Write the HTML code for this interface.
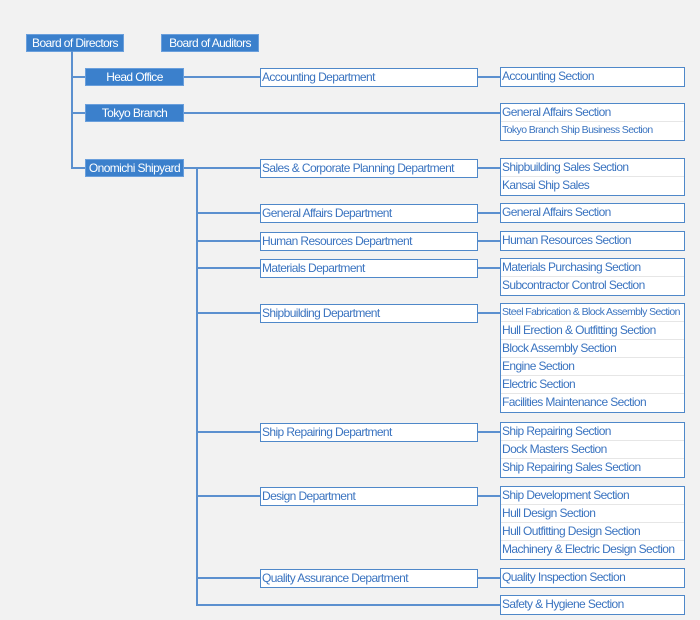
<!DOCTYPE html>
<html><head><meta charset="utf-8"><style>
body{margin:0;width:700px;height:620px;background:#f2f2f2;position:relative;overflow:hidden;font-family:"Liberation Sans",sans-serif;font-size:12px;letter-spacing:-0.6px}
.b{position:absolute;background:#3b80cc;color:#fff;height:18px;line-height:17px;text-align:center;box-sizing:border-box;border:1px solid #6a9fdc}
.d{position:absolute;left:260px;width:218px;height:19px;line-height:17px;background:#fff;border:1.5px solid #4f88c9;box-sizing:border-box;color:#3b74c0;padding-left:1px;white-space:nowrap}
.s{position:absolute;left:500px;width:185px;background:#fff;border:1.5px solid #4f88c9;box-sizing:border-box;color:#3b74c0}
.s div{height:18px;box-sizing:border-box;line-height:17px;border-bottom:1px solid #e6e6e6;padding-left:1px;white-space:nowrap}
.s div:last-child{border-bottom:none}
.h{position:absolute;height:1.5px;background:#5b90cf}
.v{position:absolute;width:1.5px;background:#5b90cf}
</style></head><body>
<div class="b" style="left:26px;top:34px;width:98px">Board of Directors</div>
<div class="b" style="left:161px;top:34px;width:98px">Board of Auditors</div>
<div class="v" style="left:71px;top:51px;height:118px"></div>
<div class="h" style="left:71px;top:76px;width:14px"></div>
<div class="h" style="left:71px;top:112px;width:14px"></div>
<div class="h" style="left:71px;top:167px;width:14px"></div>
<div class="b" style="left:85px;top:68px;width:99px">Head Office</div>
<div class="b" style="left:85px;top:104px;width:99px">Tokyo Branch</div>
<div class="b" style="left:85px;top:159px;width:99px">Onomichi Shipyard</div>

<div class="h" style="left:184px;top:76px;width:316px"></div>
<div class="h" style="left:184px;top:112px;width:316px"></div>
<div class="h" style="left:184px;top:167px;width:76px"></div>
<div class="v" style="left:196px;top:167px;height:438px"></div>
<div class="h" style="left:196px;top:212px;width:64px"></div>
<div class="h" style="left:196px;top:240px;width:64px"></div>
<div class="h" style="left:196px;top:267px;width:64px"></div>
<div class="h" style="left:196px;top:312px;width:64px"></div>
<div class="h" style="left:196px;top:431px;width:64px"></div>
<div class="h" style="left:196px;top:495px;width:64px"></div>
<div class="h" style="left:196px;top:577px;width:64px"></div>
<div class="h" style="left:196px;top:604px;width:304px"></div>
<div class="h" style="left:478px;top:76px;width:22px"></div>
<div class="h" style="left:478px;top:167px;width:22px"></div>
<div class="h" style="left:478px;top:212px;width:22px"></div>
<div class="h" style="left:478px;top:240px;width:22px"></div>
<div class="h" style="left:478px;top:267px;width:22px"></div>
<div class="h" style="left:478px;top:312px;width:22px"></div>
<div class="h" style="left:478px;top:431px;width:22px"></div>
<div class="h" style="left:478px;top:495px;width:22px"></div>
<div class="h" style="left:478px;top:577px;width:22px"></div>

<div class="d" style="top:68px">Accounting Department</div>
<div class="d" style="top:159px">Sales &amp; Corporate Planning Department</div>
<div class="d" style="top:204px">General Affairs Department</div>
<div class="d" style="top:232px">Human Resources Department</div>
<div class="d" style="top:259px">Materials Department</div>
<div class="d" style="top:304px">Shipbuilding Department</div>
<div class="d" style="top:423px">Ship Repairing Department</div>
<div class="d" style="top:487px">Design Department</div>
<div class="d" style="top:569px">Quality Assurance Department</div>

<div class="s" style="top:67px"><div>Accounting Section</div></div>
<div class="s" style="top:103px"><div>General Affairs Section</div><div style="font-size:10.5px">Tokyo Branch Ship Business Section</div></div>
<div class="s" style="top:158px"><div>Shipbuilding Sales Section</div><div>Kansai Ship Sales</div></div>
<div class="s" style="top:203px"><div>General Affairs Section</div></div>
<div class="s" style="top:231px"><div>Human Resources Section</div></div>
<div class="s" style="top:258px"><div>Materials Purchasing Section</div><div>Subcontractor Control Section</div></div>
<div class="s" style="top:303px"><div style="font-size:10.5px;letter-spacing:-0.6px">Steel Fabrication &amp; Block Assembly Section</div><div>Hull Erection &amp; Outfitting Section</div><div>Block Assembly Section</div><div>Engine Section</div><div>Electric Section</div><div>Facilities Maintenance Section</div></div>
<div class="s" style="top:422px"><div>Ship Repairing Section</div><div>Dock Masters Section</div><div>Ship Repairing Sales Section</div></div>
<div class="s" style="top:486px"><div>Ship Development Section</div><div>Hull Design Section</div><div>Hull Outfitting Design Section</div><div>Machinery &amp; Electric Design Section</div></div>
<div class="s" style="top:568px"><div>Quality Inspection Section</div></div>
<div class="s" style="top:595px"><div>Safety &amp; Hygiene Section</div></div>
</body></html>
